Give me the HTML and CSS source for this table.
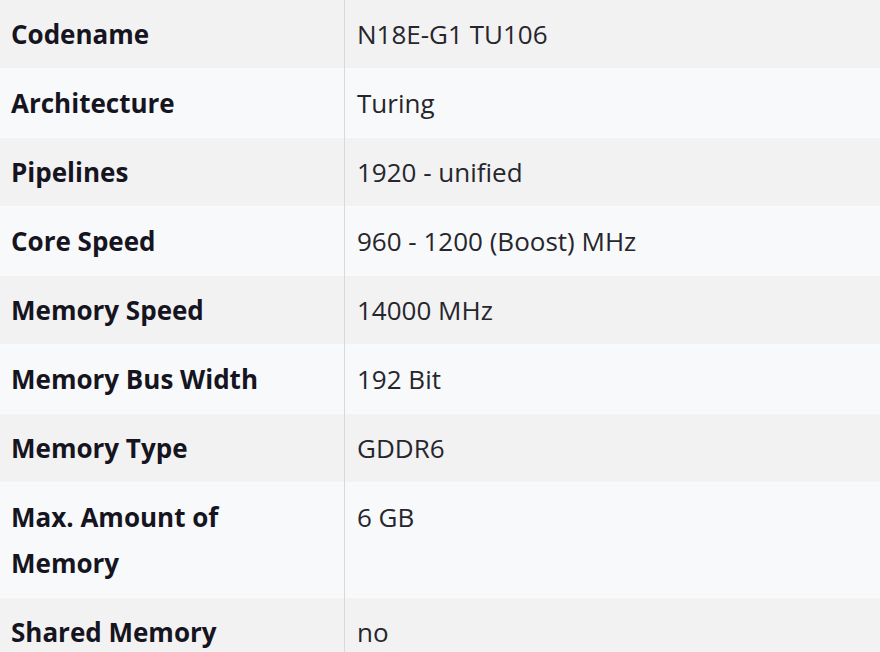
FILE: index.html
```html
<!DOCTYPE html>
<html>
<head>
<meta charset="utf-8">
<link rel="stylesheet" href="styles.css">
</head>
<body>
<table class="specs">
  <tbody>
    <tr class="odd"><th>Codename</th><td>N18E-G1 TU106</td></tr>
    <tr class="even"><th>Architecture</th><td>Turing</td></tr>
    <tr class="odd"><th>Pipelines</th><td>1920 - unified</td></tr>
    <tr class="even"><th>Core Speed</th><td>960 - 1200 (Boost) MHz</td></tr>
    <tr class="odd"><th>Memory Speed</th><td>14000 MHz</td></tr>
    <tr class="even"><th>Memory Bus Width</th><td>192 Bit</td></tr>
    <tr class="odd"><th>Memory Type</th><td>GDDR6</td></tr>
    <tr class="even"><th>Max. Amount of<br>Memory</th><td>6 GB</td></tr>
    <tr class="odd"><th>Shared Memory</th><td>no</td></tr>
  </tbody>
</table>
</body>
</html>
```
FILE: styles.css
```css
html, body {
  margin: 0;
  padding: 0;
  background: #f5f6f8;
}
.specs {
  width: 100%;
  border-collapse: collapse;
  font-family: "Open Sans", "Noto Sans", sans-serif;
  font-size: 26px;
  line-height: 46px;
}
.specs tr.odd {
  background: #f2f2f3;
}
.specs tr.even {
  background: #f8f9fb;
}
.specs th, .specs td {
  vertical-align: top;
  text-align: left;
  padding: 11px 12px;
  border-top: 1px solid #fafbfc;
}
.specs tr:first-child th, .specs tr:first-child td {
  border-top: none;
}
.specs th {
  width: 321px;
  font-weight: 700;
  color: #16151f;
  padding-left: 11px;
  border-right: 1px solid #d9d9dc;
}
.specs td {
  font-weight: 400;
  color: #26262c;
}
```
